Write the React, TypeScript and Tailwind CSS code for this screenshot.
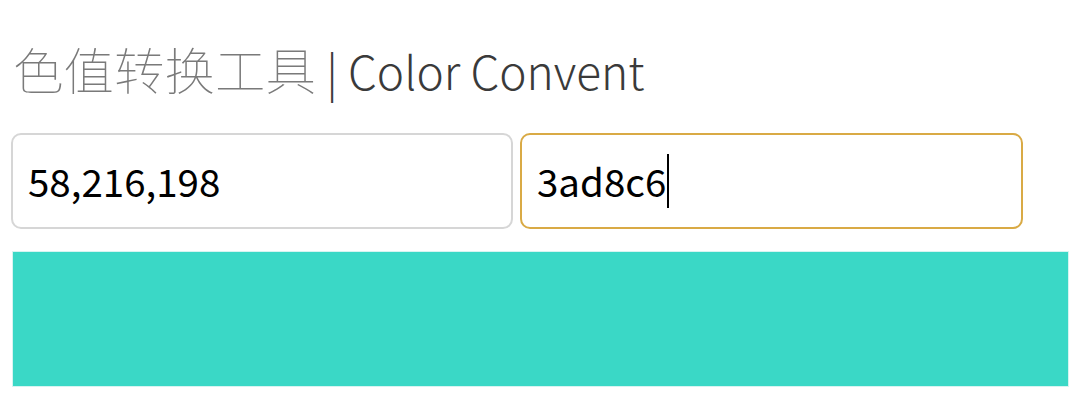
import React from "react";

const FONT = "font-['Noto_Sans_CJK_SC','Noto_Sans',sans-serif]";

export default function App() {
    const rgb = "58,216,198";
    const hex = "3ad8c6";

    return (
        <div className={`${FONT} w-[1080px] h-[402px] bg-white overflow-hidden pl-[11px] pr-[11px]`}>
            <div className="pt-[36px]">
                <h1 className="h-[64px] pl-[2px] leading-[64px] text-[#3a3a3a] whitespace-nowrap">
                    <span className="font-thin text-[50.5px] text-[#7a7a7a]">色值转换工具</span>
                    <span className="font-light text-[46px]"> | Color Convent</span>
                </h1>
            </div>
            <div className="mt-[33px] flex gap-[7px]">
                <div className="w-[502px] h-[96px] rounded-[10px] border-2 border-[#d6d6d6] flex items-center px-[15px] text-[38.5px] text-black">
                    {rgb}
                </div>
                <div className="w-[503px] h-[96px] rounded-[10px] border-2 border-[#d9aa45] flex items-center px-[15px] text-[38.5px] text-black">
                    {hex}
                    <span className="inline-block w-[2px] h-[54px] bg-black ml-[1px]" />
                </div>
            </div>
            <div className="mt-[22px] ml-[1px] h-[136px] border border-[#d6f4f1] bg-[#3ad8c6]" />
        </div>
    );
}
